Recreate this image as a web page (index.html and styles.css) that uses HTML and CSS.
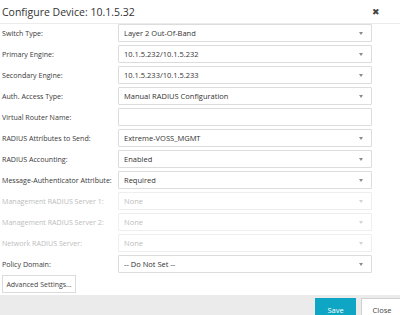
FILE: index.html
```html
<!DOCTYPE html>
<html lang="en">
  <head>
    <meta charset="UTF-8" />
    <title>Configure Device</title>
    <link rel="stylesheet" href="styles.css">
  </head>
  <body>
    <div class="dialog">
      <div class="dialog-header">
        <span class="dialog-title">Configure Device: 10.1.5.32</span>
        <span class="dialog-close">&#10006;</span>
      </div>

      <div class="form">
        <div class="row">
          <label>Switch Type:</label>
          <div class="field select">Layer 2 Out-Of-Band</div>
        </div>
        <div class="row">
          <label>Primary Engine:</label>
          <div class="field select">10.1.5.232/10.1.5.232</div>
        </div>
        <div class="row">
          <label>Secondary Engine:</label>
          <div class="field select">10.1.5.233/10.1.5.233</div>
        </div>
        <div class="row">
          <label>Auth. Access Type:</label>
          <div class="field select">Manual RADIUS Configuration</div>
        </div>
        <div class="row">
          <label>Virtual Router Name:</label>
          <div class="field"></div>
        </div>
        <div class="row">
          <label>RADIUS Attributes to Send:</label>
          <div class="field select">Extreme-VOSS_MGMT</div>
        </div>
        <div class="row">
          <label>RADIUS Accounting:</label>
          <div class="field select">Enabled</div>
        </div>
        <div class="row">
          <label>Message-Authenticator Attribute:</label>
          <div class="field select">Required</div>
        </div>
        <div class="row disabled">
          <label>Management RADIUS Server 1:</label>
          <div class="field select">None</div>
        </div>
        <div class="row disabled">
          <label>Management RADIUS Server 2:</label>
          <div class="field select">None</div>
        </div>
        <div class="row disabled">
          <label>Network RADIUS Server:</label>
          <div class="field select">None</div>
        </div>
        <div class="row">
          <label>Policy Domain:</label>
          <div class="field select">-- Do Not Set --</div>
        </div>
      </div>

      <button class="btn-advanced">Advanced Settings...</button>

      <div class="dialog-footer">
        <button class="btn btn-save">Save</button>
        <button class="btn btn-close">Close</button>
      </div>
    </div>
  </body>
</html>
```

FILE: styles.css
```css
body {
  margin: 0;
  background: #fff;
  font-family: "Open Sans", "Noto Sans", sans-serif;
  color: #333;
}

.dialog {
  display: flex;
  flex-direction: column;
  width: 400px;
  height: 315px;
  overflow: hidden;
}

.dialog-header {
  display: flex;
  flex: none;
  align-items: center;
  justify-content: space-between;
  height: 23px;
  padding: 0 20px 0 2px;
  border-bottom: 1px solid #ececec;
}

.dialog-title {
  font-size: 10.5px;
  color: #333;
}

.dialog-close {
  font-size: 9px;
  color: #444;
}

.form {
  display: flex;
  flex-direction: column;
  gap: 3px;
}

.row {
  display: grid;
  grid-template-columns: 116px 254px;
  align-items: center;
  height: 18px;
  padding-left: 2px;
  font-size: 7.1px;
  white-space: nowrap;
  color: #3a3a3a;
}

.field {
  position: relative;
  box-sizing: border-box;
  height: 18px;
  line-height: 16px;
  padding-left: 5px;
  border: 1px solid #dcdcdc;
  border-radius: 1px;
  background: #fff;
  color: #333;
  font-size: 7.5px;
}

.select::after {
  content: "";
  position: absolute;
  right: 8px;
  top: 7px;
  border-left: 2.5px solid transparent;
  border-right: 2.5px solid transparent;
  border-top: 3px solid #8a8a8a;
}

.disabled label,
.disabled .field {
  color: #bdbdbd;
}

.disabled .field {
  border-color: #eeeeee;
}

.disabled .select::after {
  border-top-color: #d4d4d4;
}

.btn-advanced {
  display: block;
  flex: none;
  margin: 2px 0 0 2px;
  height: 18px;
  width: 74px;
  padding: 0;
  border: 1px solid #dcdcdc;
  background: #fff;
  font-family: inherit;
  font-size: 7px;
  color: #444;
  white-space: nowrap;
}

.dialog-footer {
  display: flex;
  flex: 1;
  justify-content: flex-end;
  gap: 5px;
  margin-top: 2px;
  padding-top: 3px;
  background: #ebebeb;
}

.btn {
  flex: none;
  height: 24px;
  padding: 0;
  font-family: inherit;
  font-size: 7.5px;
  border: 1px solid #d0d0d0;
}

.btn-save {
  width: 41px;
  background: #0ea6c4;
  border-color: #0ea6c4;
  color: #fff;
}

.btn-close {
  width: 42px;
  margin-right: -3px;
  background: #fff;
  color: #444;
}
```
